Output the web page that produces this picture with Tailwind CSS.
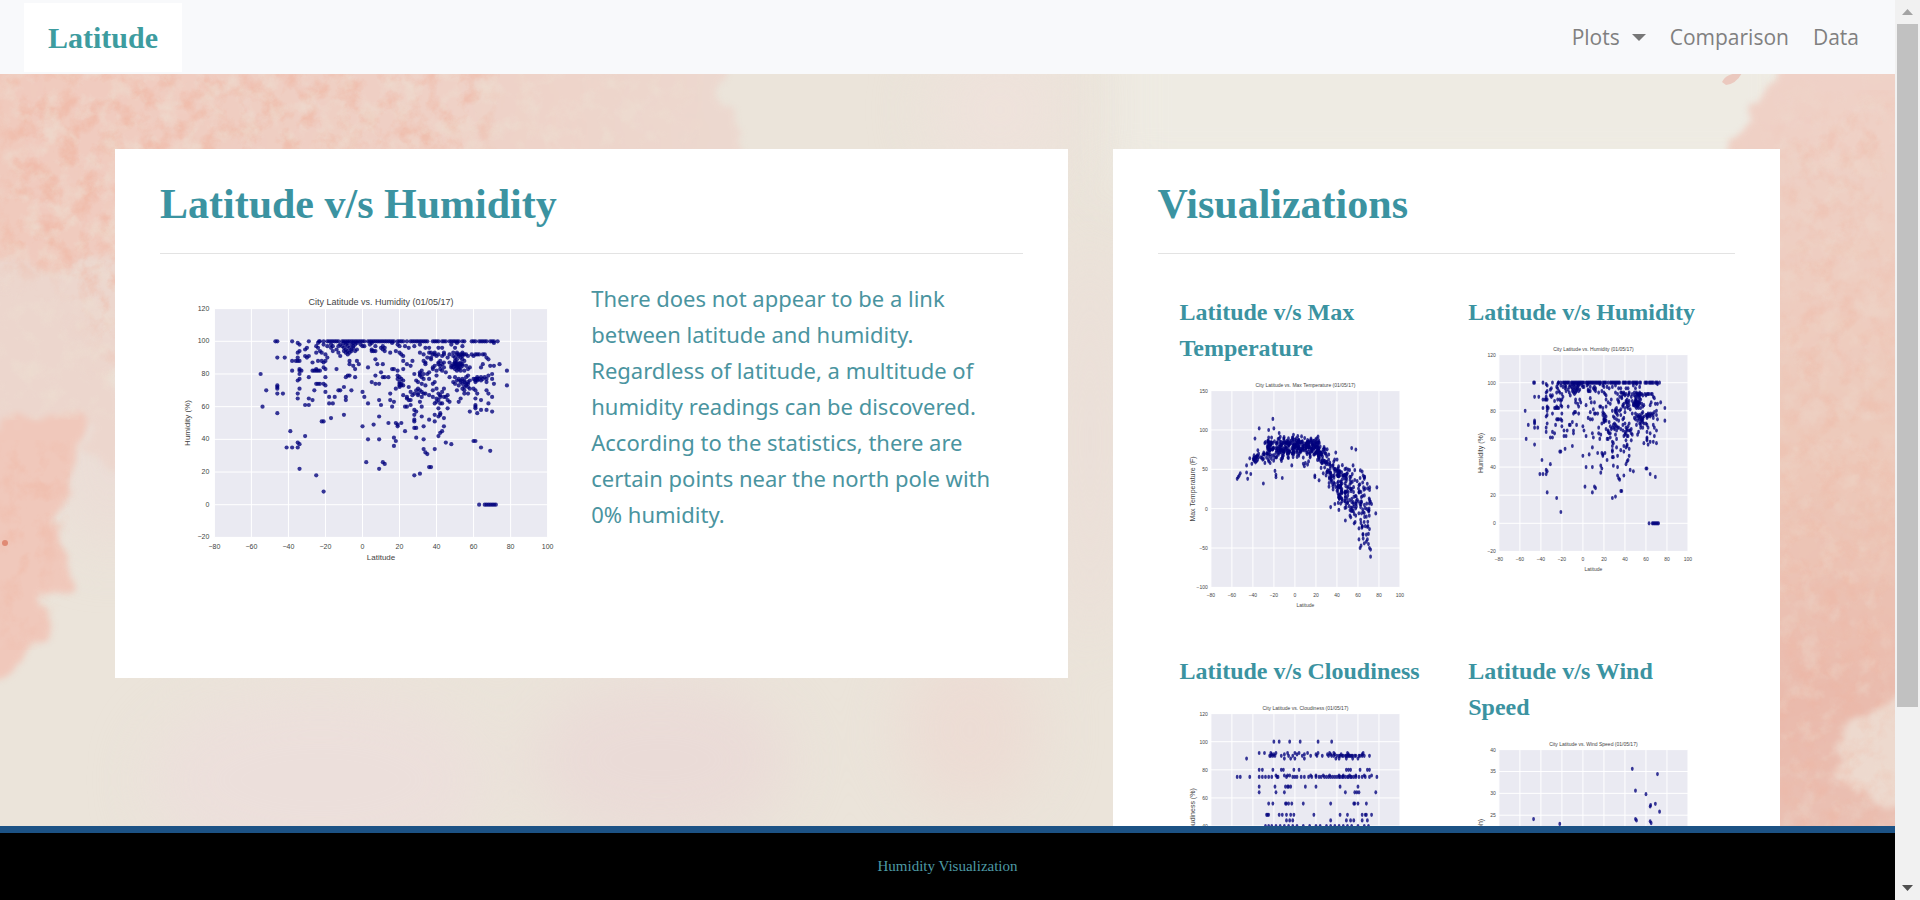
<!DOCTYPE html>
<html lang="en">
<head>
<meta charset="utf-8">
<title>Latitude - Humidity</title>
<script src="https://cdn.jsdelivr.net/npm/@tailwindcss/browser@4"></script>
</head>
<body class="bg-[#ebe2da]">
<div class="flex h-screen overflow-hidden">
  <div class="relative isolate flex min-w-0 flex-1 flex-col">
    <!-- watercolour backdrop -->
    <svg class="absolute inset-0 -z-10 h-full w-full" viewBox="0 0 1895 900" preserveAspectRatio="none" aria-hidden="true">
      <defs>
        <filter id="edge" x="-10%" y="-10%" width="120%" height="120%" color-interpolation-filters="sRGB">
          <feTurbulence type="fractalNoise" baseFrequency="0.02" numOctaves="4" seed="4" result="n"/>
          <feDisplacementMap in="SourceGraphic" in2="n" scale="60" xChannelSelector="R" yChannelSelector="G"/>
          <feGaussianBlur stdDeviation="3"/>
        </filter>
        <filter id="soft" x="-30%" y="-30%" width="160%" height="160%" color-interpolation-filters="sRGB"><feGaussianBlur stdDeviation="28"/></filter>
        <filter id="grain" x="0" y="0" width="100%" height="100%" color-interpolation-filters="sRGB">
          <feTurbulence type="fractalNoise" baseFrequency="0.05" numOctaves="5" seed="9"/>
          <feColorMatrix values="0 0 0 0 0.94  0 0 0 0 0.7  0 0 0 0 0.62  3 0 0 0 -1.3" result="t"/>
          <feGaussianBlur in="SourceAlpha" stdDeviation="14" result="m"/>
          <feComposite in="t" in2="m" operator="in"/>
        </filter>
        <filter id="fleck" x="0" y="0" width="100%" height="100%" color-interpolation-filters="sRGB">
          <feTurbulence type="fractalNoise" baseFrequency="0.05" numOctaves="4" seed="21"/>
          <feColorMatrix values="0 0 0 0 0.93  0 0 0 0 0.87  0 0 0 0 0.82  3 0 0 0 -1.4" result="t"/>
          <feGaussianBlur in="SourceAlpha" stdDeviation="14" result="m"/>
          <feComposite in="t" in2="m" operator="in"/>
        </filter>
        <linearGradient id="rightwash" x1="0" y1="0" x2="0" y2="1">
          <stop offset="0" stop-color="#efd2c8"/><stop offset=".45" stop-color="#edc9ba"/><stop offset=".72" stop-color="#eabaac"/><stop offset="1" stop-color="#ebc6ba"/>
        </linearGradient>
        <linearGradient id="topwash" x1="0" y1="0" x2="1" y2="0">
          <stop offset="0" stop-color="#f0c9bc"/><stop offset=".6" stop-color="#efd0c5"/><stop offset="1" stop-color="#ecd9d0"/>
        </linearGradient>
      </defs>
      <rect width="1895" height="900" fill="#ebe4da"/>
      <rect x="1110" y="-60" width="700" height="250" fill="#eeebe3" filter="url(#soft)"/>
      <g filter="url(#soft)">
        <ellipse cx="1000" cy="110" rx="70" ry="70" fill="#eee2db"/>
        <ellipse cx="320" cy="780" rx="170" ry="90" fill="#ecdfdb"/>
        <ellipse cx="660" cy="760" rx="130" ry="80" fill="#eadbd7"/>
        <ellipse cx="970" cy="730" rx="70" ry="80" fill="#ecdcd4"/>
        <ellipse cx="1090" cy="440" rx="40" ry="200" fill="#ebdfd8"/>
        <ellipse cx="110" cy="460" rx="60" ry="90" fill="#ebddd6"/>
      </g>
      <g filter="url(#edge)">
        <path d="M-60 0H735Q720 110 750 200H130V360L90 300L70 275L20 270L-60 265Z" fill="url(#topwash)"/>
        <path d="M-60 260H130V470L70 440L-60 440Z" fill="#ecd6cd"/>
        <path d="M-60 425H70L82 480L58 530L80 575L40 600L38 655L10 680H-60Z" fill="#f0c8bb"/>
        <path d="M1725 160Q1750 100 1810 50H1960V960H1740Z" fill="url(#rightwash)"/>
        <path d="M1930 680L1860 720L1830 780L1960 830Z" fill="#edd9ce"/>
      </g>
      <path d="M0 60H500L480 170H150L125 380L60 270H0Z" filter="url(#grain)" opacity=".55"/>
      <path d="M0 60H700L690 170H150L125 420H0Z" filter="url(#fleck)" opacity=".6"/>
      <path d="M0 440H70L55 550L25 650H0Z" filter="url(#grain)" opacity=".4"/>
      <path d="M1780 130L1895 90V900H1770Z" filter="url(#grain)" opacity=".3"/>
      <path d="M1760 100L1895 75V900H1770Z" filter="url(#fleck)" opacity=".3"/>
      <path d="M1722 82Q1726 73 1742 73Q1736 84 1726 85Z" fill="#ebc9bf"/>
      <circle cx="5" cy="543" r="3" fill="#e08a74"/>
    </svg>

    <header class="flex h-[74px] shrink-0 items-center justify-between bg-[#f8f9fb] pr-9 pl-6">
      <a href="#" class="flex h-[69px] items-center bg-white px-6 font-['Liberation_Serif',serif] text-[30px] font-bold text-[#3d9c9f]">Latitude</a>
      <nav class="flex items-center gap-6 font-['Open_Sans',sans-serif] text-[21px] leading-[36px] text-[#808080]">
        <button type="button" class="flex items-center gap-3">Plots
          <svg class="h-[7px] w-[14px]" viewBox="0 0 14 7" aria-hidden="true"><path d="M0 0H14L7 7Z" fill="#777"/></svg>
        </button>
        <a href="#">Comparison</a>
        <a href="#">Data</a>
      </nav>
    </header>

    <main class="grid min-h-0 flex-1 grid-cols-12 items-start gap-[45px] overflow-hidden px-[115px] pt-[75px]">
      <section class="col-span-7 bg-white px-[45px] pb-[112px] text-[#3b93a1]">
        <h1 class="pt-6 pb-[17px] font-['Liberation_Serif',serif] text-[42px] leading-[63px] font-bold">Latitude v/s Humidity</h1>
        <hr class="border-[#e3e3e3]">
        <div class="grid grid-cols-2 pt-[26px]">
          <figure data-plot="humidity" data-size="large" class="h-[286px]"></figure>
          <p class="font-['Noto_Sans',sans-serif] text-[22px] leading-[36px] text-[#4a94a0]">There does not appear to be a link between latitude and humidity. Regardless of latitude, a multitude of humidity readings can be discovered. According to the statistics, there are certain points near the north pole with 0% humidity.</p>
        </div>
      </section>

      <section class="col-span-5 bg-white px-[45px] text-[#3b93a1]">
        <h2 class="pt-6 pb-[17px] font-['Liberation_Serif',serif] text-[42px] leading-[63px] font-bold">Visualizations</h2>
        <hr class="border-[#e3e3e3]">
        <div class="grid grid-cols-2 gap-y-[41px] pt-10 font-['Liberation_Serif',serif] text-[24px] leading-[36px] font-bold">
          <a href="#" class="px-[22px]"><h3>Latitude v/s Max Temperature</h3><figure data-plot="temperature" class="h-[246px]"></figure></a>
          <a href="#" class="px-[22px]"><h3>Latitude v/s Humidity</h3><figure data-plot="humidity" class="h-[246px]"></figure></a>
          <a href="#" class="px-[22px]"><h3>Latitude v/s Cloudiness</h3><figure data-plot="cloudiness" class="h-[246px]"></figure></a>
          <a href="#" class="px-[22px]"><h3>Latitude v/s Wind Speed</h3><figure data-plot="wind" class="h-[246px]"></figure></a>
        </div>
      </section>
    </main>

    <footer class="flex h-[74px] shrink-0 items-center justify-center border-t-[7px] border-[#1c5285] bg-black font-['Liberation_Serif',serif] text-[15px] text-[#4d9aa5]">Humidity Visualization</footer>
  </div>

  <!-- scroll bar -->
  <div class="flex w-[25px] shrink-0 flex-col items-center bg-[#f1f1f1]" aria-hidden="true">
    <svg class="h-6 w-full shrink-0" viewBox="0 0 25 24"><path d="M7 15L12.500 9L18 15Z" fill="#a3a3a3"/></svg>
    <div class="min-h-0 w-[21px] grow-[683] bg-[#c1c1c1]"></div>
    <div class="min-h-0 grow-[169]"></div>
    <svg class="h-6 w-full shrink-0" viewBox="0 0 25 24"><path d="M7 9L12.500 15L18 9Z" fill="#505050"/></svg>
  </div>
</div>

<script>
// Small repeatable random generator, so that the plots look the same on each load.
function rng(s) { return () => ((s = (s * 1664525 + 1013904223) >>> 0) / 4294967296); }

// Humidity samples: "humidity: latitudes".
const humidityRows = `
100:-47 -46 -38 -29 -23.500 -23 -21 -19 -18 -17 -16 -15 -14 -13 -11 -10 -9 -8 -7 -6 -5 -4 -3 -2 -1 0 1 3 4 5 6 7 8 9 10 11 12 13 14 15 16 17 19 20 21 22 24 26 27 28 29 30 31 32 33 34 35 38 39 40 41 43 44 45 47 48 49 50 51 52 54 55 59 60 61 63 64 65 66 67 69 70 71 73
99:-35 -24 -10 -8 -5 -3 5 16 51 71
98:-34 -21 -17 -12 -9 -6 -4 -1 4 19 31 48
97:-25 -19 -16 -13 -11 -8 -5 0 1 7 11 20 23 28 54
96:-30 -24 -17 -10 -7 -5 10 12 25 34 36 41 43 50
95:-31 -14 -9 -6 -3 5 11
94:-34 -23 -16 -10 -8 -6 -4 5 6 7 12 18
93:-35 -25 -22 -13 -9 -7 15 20 31 36 37 39 44 49 51 54
92:-20 -8 21 33 38 39 41 44 47 51 52 53 54 55 56 59 61 62 63 65 66
91:-31 -29 -12 22 40 43 49 52 54 57 60
90:-46 -42 -35 -30 -19 35 37 46 50 53 67
89:7 37 51 54 68
88:-38 -36 -35 -34 -24 -22 -20 -7 -3 22 27 33 42 50 55
87:-27 -21 34 41 44 47 50 51 53
86:-7 -2 8 11 24 34 41 43 49 50 51 52 53 54 65 74
85:-5 26 39 42 48 50 51 52 54 56 69 71
84:-21 3 38 44 48 49 51 52 53 58 64
83:-34 -25 -20 -14 -4 16 17 22 38 42 50 52 57
82:-38 -34 -33 -27 -26 -25 -24 -23 19 32 40 43 51 53 55 78
81:10 31 36 45
80:-55 -34 28 31 33 35 70
79:-8 -7 7 19 31 40 57 68
78:-29 -20 -9 -4 11 12 14 20 32 47 50 56 62 64 66
77:-34 19 21 33 36 52 54 60 61 62 63 65 67 70
76:-35 22 29 51 53 55 58 61 62 64
75:5 20 30 39 49 53 55 57 61 67
74:-25 -24 -23 -21 7 9 20 21 32 38 50 54 56 57 71
73:-46 -20 20 21 22 34 52 56 78
72:-46 -10 20 25 55 57
71:-46 -34 18 30 40 44 54 58 60
70:-52 -26 -13 -12 -6 29 31 38 51 55 61 67
69:-20 0 26 32 43
68:-46 -43 -35 15 28 30 33 34 41 55 57 62 68
67:22 27 30 36 42 46
66:-18 -15 -9 1 24 32 38 42 44 45 70
65:-35 -29 24 40 53 61
64:-27 -9 9 15 25 26 41 46 64
63:17 31 40 47 52
62:-18 -16 3 39 42 43 68
61:-31 -29 10 26 61
60:-54 16 23 24 32 61
59:41 46 61
58:28 64 67
57:29 58 70
56:-46 42 62
55:-10 28 39 42
54:9 32 41
53:-17 44
52:28 36
51:-22 -21 28 39
50:14 18 21
49:6 19
48:0 19 33 44
47:28 29
45:-39 23 43
44:42
42:-31 41
41:17 29
40:3 9 33
39:18 60 61
38:-35 45
37:-34 48
36:17
35:-41 -38 -35 64
34:33 39
33:69
32:34
31:35
26:2 11
25:12
23:36 37
22:-34 9
19:31
18:-25 28
8:-21
0:63 66 67 68 69 70 71 72`;

// Cloudiness samples in the same form.
const cloudRows = `
100:-20 -15 -5 5 22 35
92:-34 -29 -23 -18 -7 0 4 12 22 33 37 50 65
91:-22 -20 -10 2 9 20 31 34 38 44 51 64
90:-24 -23 -21 -19 -13 -6 -2 7 15 21 26 32 35 37 40 42 43 45 46 48 49 50 51 52 53 54 55 57 58 61 62 64 66 71
88:-46 -10 -4 0 9 39 42 49 55 60
80:-34 -31 -21 -13 -11 -1 4 49 51 53 62 69 71
76:-18 -10 -7 -5 15 20 27 33 42 46 52 58 66 73
75:-55 -52 -43 -34 -31 -28 -25 -22 -17 -16 -8 -2 0 2 6 9 13 16 20 23 25 28 30 32 34 36 38 40 42 43 45 46 48 50 51 53 54 56 58 61 64 67 71 78
68:-34 -19 -9 -7 -6 -4 10 20 43 60
64:-34 -18 -10 48 57 59 61 77
56:-25 -21 -9 -8 -6 -3 8 34 56 57 60 68
48:-27 -26 -25 -15 -12 -8 -4 -1 18 43 50 64 67 68 73
44:-8 -5 -2 34 49 53 56 64 69
40:-28 -25 -22 -18 -14 -10 -6 -2 2 8 14 20 24 30 34 38 42 46 50 54 60 66 70`;

const windPoints = [[47,35.6],[71,34.4],[50,30.6],[60,29.800],[69,27.6],[64,27],[64.500,27.3],[73,25.800],[-47,24.1],[-22,23],[50,24.1],[51,23.800],[64,23.6],[65,23.2]];

function fromRows(rows) {
  return rows.trim().split("\n").flatMap(line => {
    const [v, lats] = line.split(":");
    return lats.split(" ").map(l => [Number(l), Number(v)]);
  });
}

function temperaturePoints() {
  const r = rng(11);
  // Mean temperature and spread by latitude, joined by straight lines.
  const curve = [[-40,61,10],[-34,68,20],[-25,75,22],[-15,75,26],[0,79,20],[12,78,18],[20,76,22],[28,65,30],[35,47,44],[42,32,44],[50,24,44],[56,12,56],[64,6,56],[72,8,50]];
  const at = l => {
    const i = Math.max(1, curve.findIndex(c => c[0] >= l));
    const [a, b] = [curve[i - 1], curve[i]], t = (l - a[0]) / (b[0] - a[0]);
    return [a[1] + t * (b[1] - a[1]), a[2] + t * (b[2] - a[2])];
  };
  const pts = [[-55,38],[-54,40],[-53,42],[-52,45],[-46,55],[-46,46],[-45,38],[-43,64],[-42,44],[-41,57],[-38,89],[-34,102],[-30,32],[-25,100],[-21,114],[-20,102],[-15,96],[-19,48],[-18,43],[-18,40],[-12,39],[-3,55],[8,57],[9,54],[10,58],[12,56],[13,60],[19,42],[19,40],[23,36],[27,45],[54,77],[58,75],[57,49],[65,42],[66,40],[66,38],[62,39],[78,27],[77,-6],[73,6],[72,-61],[72,-52],[71,-50],[61,-39],[63,-47],[62,-50],[68,-42],[70,-45],[69,-39],[66,-44],[65,-38],[68,-33],[70,-32],[61,-25],[64,-22],[69,-23],[71,-26],[34,2],[38,6],[48,-15]];
  for (let i = 0; i < 620; i++) {
    const l = i < 30 ? -40 + 15 * r() : i < 320 ? -27 + 50 * r() : i < 460 ? 20 + 25 * r() : 40 + 32 * r();
    const [mean, spread] = at(l);
    pts.push([l, mean + spread * (r() + r() - 1) * .8]);
  }
  return pts;
}

const plots = {
  humidity: { title: "City Latitude vs. Humidity (01/05/17)", label: "Humidity (%)", min: -20, max: 120, step: 20, points: fromRows(humidityRows) },
  temperature: { title: "City Latitude vs. Max Temperature (01/05/17)", label: "Max Temperature (F)", min: -100, max: 150, step: 50, points: temperaturePoints() },
  cloudiness: { title: "City Latitude vs. Cloudiness (01/05/17)", label: "Cloudiness (%)", min: -20, max: 120, step: 20, points: fromRows(cloudRows) },
  wind: { title: "City Latitude vs. Wind Speed (01/05/17)", label: "Wind Speed (mph)", min: -5, max: 40, step: 5, points: windPoints }
};

document.querySelectorAll("[data-plot]").forEach(fig => {
  const p = plots[fig.dataset.plot];
  const large = fig.dataset.size === "large";
  const w = large ? 430 : 244, h = large ? 286 : 246;
  const left = w * .125, right = w * .9, top = h * .1, bottom = h * .9;
  const X = l => left + (l + 80) / 180 * (right - left);
  const Y = v => bottom - (v - p.min) / (p.max - p.min) * (bottom - top);
  const minus = n => String(n).replace("-", "\u2212");
  let s = `<rect x="${left}" y="${top}" width="${right - left}" height="${bottom - top}" fill="#eaeaf2"/>`;
  let grid = "", ticks = "";
  for (let l = -80; l <= 100; l += 20) {
    grid += `M${X(l)} ${top}V${bottom}`;
    ticks += `<text x="${X(l)}" y="${bottom + (large ? 12 : 10)}" text-anchor="middle">${minus(l)}</text>`;
  }
  for (let v = p.min; v <= p.max; v += p.step) {
    grid += `M${left} ${Y(v)}H${right}`;
    ticks += `<text x="${left - (large ? 5 : 3)}" y="${Y(v) + 2}" text-anchor="end">${minus(v)}</text>`;
  }
  s += `<path d="${grid}" stroke="#fff" fill="none"/>`;
  const rx = large ? 2.1 : 1.4, ry = large ? 2.1 : 2.1;
  s += `<g fill="#00007c" fill-opacity=".78">` + p.points.map(([l, v]) => `<ellipse cx="${X(l).toFixed(1)}" cy="${Y(v).toFixed(1)}" rx="${rx}" ry="${ry}"/>`).join("") + `</g>`;
  const mid = (left + right) / 2, cy = (top + bottom) / 2, lx = large ? 29 : 15;
  s += `<g fill="#444" font-size="${large ? 7 : 5}">${ticks}</g>`;
  s += `<g fill="#444" text-anchor="middle"><text x="${mid}" y="${top - 4}" font-size="${large ? 9 : 5}">${p.title}</text>`;
  s += `<text x="${mid}" y="${bottom + (large ? 23 : 20)}" font-size="${large ? 8 : 5}">Latitude</text>`;
  s += `<text transform="translate(${lx} ${cy}) rotate(-90)" font-size="${large ? 8 : 7}">${p.label}</text></g>`;
  fig.innerHTML = `<svg viewBox="0 0 ${w} ${h}" class="h-full w-full font-['Liberation_Sans',sans-serif] font-normal" role="img" aria-label="${p.title}">${s}</svg>`;
});
</script>
</body>
</html>
